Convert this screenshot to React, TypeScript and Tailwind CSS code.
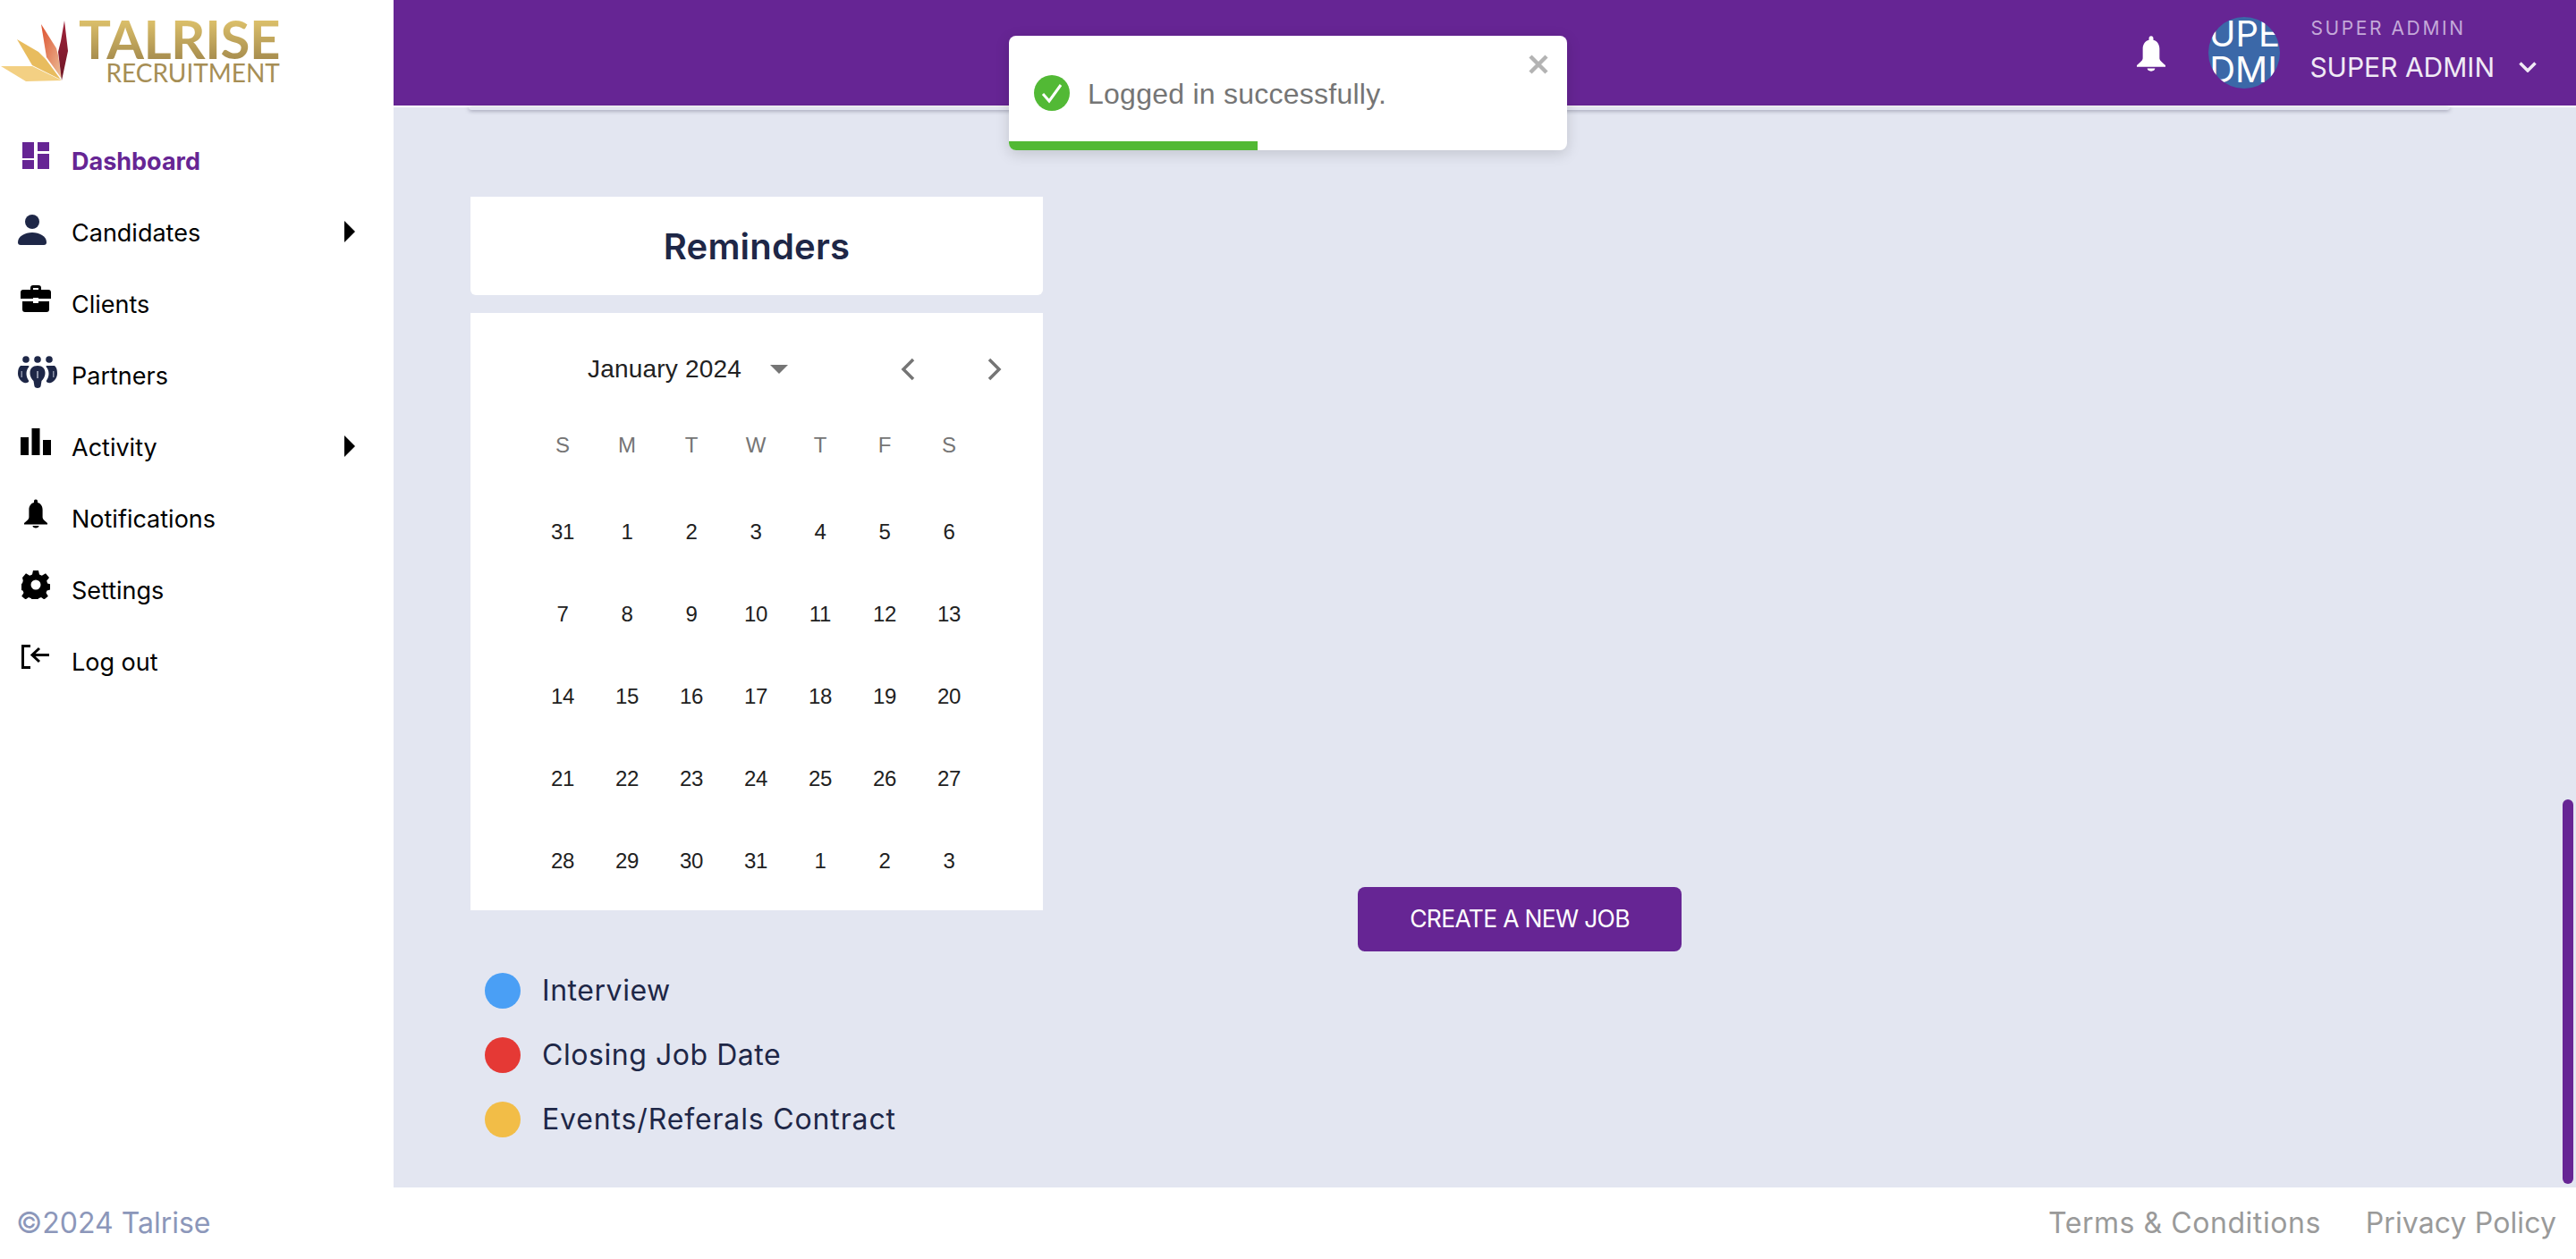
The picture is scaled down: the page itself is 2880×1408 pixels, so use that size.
function Dash() {
  return (
    <svg width="30" height="30" viewBox="0 0 30 30" fill="#662594">
      <rect x="0" y="0" width="13" height="18" />
      <rect x="17" y="0" width="13" height="10" />
      <rect x="0" y="20" width="13" height="10" />
      <rect x="17" y="13" width="13" height="17" />
    </svg>
  );
}
function Person() {
  return (
    <svg width="32" height="34" viewBox="0 0 32 34" fill="#1e2747">
      <circle cx="16" cy="8" r="8" />
      <path d="M0 31c0-7 8-11 16-11s16 4 16 11c0 2-1 3-3 3H3c-2 0-3-1-3-3z" />
    </svg>
  );
}
function Case() {
  return (
    <svg width="34" height="30" viewBox="0 0 34 30" fill="#000">
      <path d="M11 6V3c0-2 1-3 3-3h6c2 0 3 1 3 3v3h-3V3h-6v3z" />
      <path d="M3 5h28c2 0 3 1 3 3v7H20v-1h-6v1H0V8c0-2 1-3 3-3z" />
      <path d="M2 18h12v2h6v-2h12v9c0 2-1 3-3 3H5c-2 0-3-1-3-3z" />
    </svg>
  );
}
function People() {
  return (
    <svg width="44" height="36" viewBox="0 0 44 36" fill="#1e2747">
      <circle cx="9" cy="4" r="3.800" />
      <circle cx="22" cy="4" r="3.800" />
      <circle cx="35" cy="4" r="3.800" />
      <path d="M3 11h8.500c1 0 1.300.8.700 1.500-1.800 2-2.700 4.500-2.700 7.500 0 2.800 1 5.200 2.500 7.500.4.700.3 1.300-.3 1.800-1.300 1-3 1.400-4.700.7C2.500 28 0 24 0 19.500 0 15.500 1 12.500 3 11z" />
      <path d="M41 11h-8.500c-1 0-1.300.8-.7 1.500 1.800 2 2.700 4.500 2.700 7.500 0 2.800-1 5.200-2.500 7.500-.4.700-.3 1.300.3 1.800 1.300 1 3 1.400 4.700.7 4.500-2 7-6 7-10.500 0-4-1-7-3-8.500z" />
      <path d="M22 11c5.500 0 8.500 3 8.500 8 0 4.500-2.300 7-4 9l-1 6c-.6 2.600-6.400 2.600-7 0l-1-6c-1.700-2-4-4.500-4-9 0-5 3-8 8.500-8z" />
      <rect x="21" y="17" width="2" height="8" fill="#8d93a8" />
      <rect x="3.500" y="17" width="1.500" height="7" fill="#8d93a8" />
      <rect x="39" y="17" width="1.500" height="7" fill="#8d93a8" />
    </svg>
  );
}
function Bars() {
  return (
    <svg width="34" height="30" viewBox="0 0 34 30" fill="#000">
      <rect x="0" y="10" width="9" height="20" />
      <rect x="12.500" y="0" width="9" height="30" />
      <rect x="25" y="13" width="9" height="17" />
    </svg>
  );
}
function Bell({ color, w, h }: { color: string; w: number; h: number }) {
  return (
    <svg width={w} height={h} viewBox="0 0 26 32" fill={color}>
      <path d="M13 0c1.200 0 2 .9 2 2v1.600c3.600 1 5.600 4 5.600 8V20c0 2 2 3.500 5.400 6.500V28H0v-1.500C3.400 23.500 5.400 22 5.400 20v-8.400c0-4 2-7 5.600-8V2c0-1.100.8-2 2-2z" />
      <path d="M9.500 29.500h7c0 1.500-1.500 2.500-3.500 2.500s-3.500-1-3.500-2.500z" />
    </svg>
  );
}
function Gear() {
  return (
    <svg width="32" height="32" viewBox="0 0 32 32" fill="#000">
      <path
        fillRule="evenodd"
        d="M13 0h6l1 4.500 2.800 1.200L27 3.200l4 4.800-2.800 3.600.9 2.800 3 1v6l-3.600 1-1 2.600 2.300 3.800-4.400 3.600-3.400-2.400-3 1.200-1 3.600h-6l-1-3.600-3-1.200-3.400 2.400-4.400-3.600 2.300-3.800-1-2.600-3.600-1v-6l3-1 .9-2.800L1 8l4-4.800 4.200 2.500L12 4.500zM16 10.500a5.500 5.500 0 1 0 0 11 5.500 5.500 0 0 0 0-11z"
      />
    </svg>
  );
}
function Logout() {
  return (
    <svg width="32" height="27" viewBox="0 0 32 27" fill="none" stroke="#000" strokeWidth="3">
      <path d="M10 1.500H1.500v24H10" />
      <path d="M31 11.500H12M20 4l-8 7.500 8 7.500" />
    </svg>
  );
}
function Tri() {
  return (
    <svg width="12" height="24" viewBox="0 0 12 24" fill="#000">
      <path d="M0 0l12 12L0 24z" />
    </svg>
  );
}

const menu = [
  { label: "Dashboard", icon: <Dash />, active: true, ic: "mt-[-14px]" },
  { label: "Candidates", icon: <Person />, arrow: true, ic: "mt-[-8px] pr-[8px]" },
  { label: "Clients", icon: <Case />, ic: "mt-[-14px]" },
  { label: "Partners", icon: <People />, ic: "mt-[-10px] pl-[4px]" },
  { label: "Activity", icon: <Bars />, arrow: true, ic: "mt-[-14px]" },
  { label: "Notifications", icon: <Bell color="#000" w={26} h={33} />, ic: "mt-[-13px]" },
  { label: "Settings", icon: <Gear />, ic: "mt-[-14px]" },
  { label: "Log out", icon: <Logout />, ic: "mt-[-14px]" },
];

const weeks = [
  [31, 1, 2, 3, 4, 5, 6],
  [7, 8, 9, 10, 11, 12, 13],
  [14, 15, 16, 17, 18, 19, 20],
  [21, 22, 23, 24, 25, 26, 27],
  [28, 29, 30, 31, 1, 2, 3],
];

function Logo() {
  return (
    <div className="flex h-[118px] items-start">
      <svg width="78" height="92" viewBox="0 0 78 92" className="shrink-0">
        <defs>
          <linearGradient id="red" x1="0" y1="0" x2="1" y2="1">
            <stop offset="0" stopColor="#dd5230" />
            <stop offset="1" stopColor="#ecc09a" />
          </linearGradient>
          <linearGradient id="dark" x1="0" y1="0" x2="0" y2="1">
            <stop offset="0" stopColor="#a0233a" />
            <stop offset="1" stopColor="#6d1626" />
          </linearGradient>
        </defs>
        <polygon points="1,74 36,74 69,90 29,91" fill="#f3d083" />
        <polygon points="19,44 43,58 51,66 68,89 36,73" fill="#e8bc5e" />
        <polygon points="46,27 63,54 65,62 69,88 52,64" fill="url(#red)" />
        <polygon points="72,23 76,57 69,90 65,58 68,46" fill="url(#dark)" />
      </svg>
      <div className="ml-[10px] flex flex-col items-end font-['Lato',sans-serif]">
        <div className="mt-[20px] bg-gradient-to-b from-[#dfc36c] to-[#a88e4f] bg-clip-text text-[60px] leading-[46px] font-bold tracking-[-0.5px] text-transparent">
          TALRISE
        </div>
        <div className="mt-[3px] text-[28px] leading-[24px] text-[#a68e55]">RECRUITMENT</div>
      </div>
    </div>
  );
}

export default function App() {
  return (
    <div className="relative flex h-[1408px] w-[2880px] flex-col overflow-hidden bg-white font-['Inter',sans-serif]">
      <div className="flex h-[1328px]">
        <aside className="w-[440px] shrink-0 bg-white">
          <Logo />
          <nav className="mt-[23px] flex flex-col">
            {menu.map((m) => (
              <div key={m.label} className="flex h-[80px] items-center">
                <div className={`flex w-[80px] shrink-0 justify-center ${m.ic}`}>{m.icon}</div>
                <span
                  className={
                    m.active
                      ? "text-[27px] font-bold text-[#662594]"
                      : "text-[27px] text-black"
                  }
                >
                  {m.label}
                </span>
                {m.arrow && (
                  <div className="ml-auto mr-[43px] mt-[-4px]">
                    <Tri />
                  </div>
                )}
              </div>
            ))}
          </nav>
        </aside>
        <div className="flex min-w-0 flex-1 flex-col">
          <header className="flex h-[120px] shrink-0 items-center border-b-2 border-white bg-[#662594] pr-[44px]">
            <div className="ml-auto mt-[2px]">
              <Bell color="#fff" w={32} h={40} />
            </div>
            <div className="ml-[48px] flex h-[80px] w-[80px] shrink-0 items-center justify-center overflow-hidden rounded-full bg-[#3b68a8] text-center text-[40px] leading-[40px] text-white">
              <div className="mt-[-3px] w-[66px] shrink-0">
                <div className="flex justify-center whitespace-nowrap">SUPER</div>
                <div className="flex justify-center whitespace-nowrap">ADMIN</div>
              </div>
            </div>
            <div className="ml-[33px] flex flex-col">
              <span className="ml-[1px] mt-[-6px] text-[21px] leading-[26px] tracking-[2.6px] text-[#c4a9d9]">SUPER ADMIN</span>
              <span className="mt-[12px] text-[30px] leading-[36px] text-[#f0eaf5]">SUPER ADMIN</span>
            </div>
            <svg width="20" height="12" viewBox="0 0 20 12" fill="none" stroke="#f0eaf5" strokeWidth="3.500" className="ml-[27px] mt-[32px]">
              <path d="M1.500 1.500L10 10l8.500-8.500" />
            </svg>
          </header>
          <main className="flex min-h-0 flex-1 flex-col bg-[#e3e6f1]">
            <div className="ml-[84px] h-[3px] w-[2215px] rounded-b-[8px] bg-[#e3e6f1] shadow-[0_1px_4px_rgba(60,60,90,0.5)]" />
            <div className="flex">
              <div className="ml-[86px] mt-[97px] w-[640px] shrink-0">
                <div className="flex h-[110px] items-center justify-center rounded-b-[6px] bg-white pt-[2px] text-[40px] font-semibold tracking-[0.2px] text-[#1e2747]">
                  Reminders
                </div>
                <div className="mt-[20px] h-[668px] bg-white font-['Liberation_Sans',sans-serif]">
                  <div className="flex h-[126px] items-center">
                    <span className="ml-[131px] text-[28px] tracking-[0.2px] text-[#212121]">January 2024</span>
                    <svg width="20" height="10" viewBox="0 0 20 10" fill="#757575" className="ml-[32px]">
                      <path d="M0 0h20L10 10z" />
                    </svg>
                    <svg width="16" height="26" viewBox="0 0 16 26" fill="none" stroke="#757575" strokeWidth="3.500" className="ml-[126px]">
                      <path d="M14 2L3 13l11 11" />
                    </svg>
                    <svg width="16" height="26" viewBox="0 0 16 26" fill="none" stroke="#757575" strokeWidth="3.500" className="ml-[81px]">
                      <path d="M2 2l11 11L2 24" />
                    </svg>
                  </div>
                  <div className="ml-[67px] mt-[2px] grid h-[40px] w-[504px] grid-cols-7 items-center text-center text-[24px] text-[#757575]">
                    {["S", "M", "T", "W", "T", "F", "S"].map((d, i) => (
                      <span key={i}>{d}</span>
                    ))}
                  </div>
                  <div className="ml-[67px] mt-[31px] w-[504px]">
                    {weeks.map((w, i) => (
                      <div key={i} className="grid h-[92px] grid-cols-7 items-center text-center text-[24px] tracking-[-0.3px] text-[#212121]">
                        {w.map((d, j) => (
                          <span key={j}>{d}</span>
                        ))}
                      </div>
                    ))}
                  </div>
                </div>
                <div className="mt-[70px] flex flex-col gap-[32px] pl-[16px]">
                  <div className="flex h-[40px] items-center">
                    <span className="h-[40px] w-[40px] shrink-0 rounded-full bg-[#4a9ff5]" />
                    <span className="ml-[24px] text-[32px] tracking-[0.55px] text-[#1e2747]">Interview</span>
                  </div>
                  <div className="flex h-[40px] items-center">
                    <span className="h-[40px] w-[40px] shrink-0 rounded-full bg-[#e53935]" />
                    <span className="ml-[24px] text-[32px] tracking-[0.55px] text-[#1e2747]">Closing Job Date</span>
                  </div>
                  <div className="flex h-[40px] items-center">
                    <span className="h-[40px] w-[40px] shrink-0 rounded-full bg-[#f2bd47]" />
                    <span className="ml-[24px] text-[32px] tracking-[0.85px] text-[#1e2747]">Events/Referals Contract</span>
                  </div>
                </div>
              </div>
              <button className="ml-[352px] mt-[869px] flex h-[72px] w-[362px] shrink-0 items-center justify-center rounded-[8px] bg-[#662594] text-[26.5px] tracking-[-0.7px] text-white">
                CREATE A NEW JOB
              </button>
            </div>
          </main>
        </div>
      </div>
      <footer className="flex h-[80px] shrink-0 items-center bg-white pl-[18px] pr-[22px] text-[32px]">
        <span className="text-[#8c97ba]">©2024 Talrise</span>
        <span className="ml-auto tracking-[0.55px] text-[#9a9a9a]">Terms &amp; Conditions</span>
        <span className="ml-[50px] tracking-[0.1px] text-[#9a9a9a]">Privacy Policy</span>
      </footer>

      <div className="absolute left-[2865px] top-[894px] h-[430px] w-[12px] rounded-full bg-[#662594]" />

      <div className="absolute left-[1128px] top-[40px] flex h-[128px] w-[624px] flex-col overflow-hidden rounded-[8px] bg-white shadow-[0_4px_16px_rgba(0,0,0,0.15)] font-['Liberation_Sans',sans-serif]">
        <div className="flex flex-1 items-center pl-[28px] pt-[2px]">
          <svg width="40" height="40" viewBox="0 0 40 40" className="mt-[8px]">
            <circle cx="20" cy="20" r="20" fill="#52b935" />
            <path d="M10 21l7 8L30 11" fill="none" stroke="#fff" strokeWidth="3" />
          </svg>
          <span className="ml-[20px] mt-[9px] text-[32px] tracking-[0.25px] text-[#757575]">Logged in successfully.</span>
          <svg width="22" height="22" viewBox="0 0 22 22" stroke="#b3b3b3" strokeWidth="4.500" className="ml-auto mr-[21px] mt-[-57px]">
            <path d="M2 2l18 18M20 2L2 20" />
          </svg>
        </div>
        <div className="h-[10px] w-[278px] bg-[#52b935]" />
      </div>
    </div>
  );
}
